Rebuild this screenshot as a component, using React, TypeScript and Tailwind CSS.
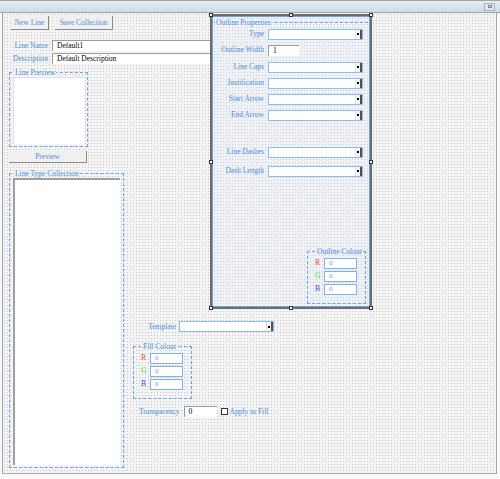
import React from 'react'

const grid = 'bg-[#f4f4f4] bg-[radial-gradient(circle,#c4c4c4_0.7px,transparent_0.9px)] bg-size-[3px_3px]'
const panelGrid = 'bg-[#eff1f4] bg-[radial-gradient(circle,#c6d0dc_0.7px,transparent_0.9px)] bg-size-[3px_3px]'
const txt = 'text-[#4a8fdc] text-[7.5px] leading-none'
const groupBorder = 'border border-dashed border-[#62a5e8]'

function Combo({ w }: { w: string }) {
  return (
    <div className={`${w} h-[11px] shrink-0 bg-white border border-[#8fbdea] flex justify-end`}>
      <div className="w-[7px] bg-[#f6f6f6] border-l border-[#dcdcdc] border-r-2 border-r-[#505050] flex items-center justify-center">
        <div className="w-[2px] h-[2px] bg-black" />
      </div>
    </div>
  )
}

function Sunken({ w, value }: { w: string; value: string }) {
  return (
    <div className={`${w} h-[11px] shrink-0 bg-white border-t border-l border-[#9a9a9a] flex items-center pl-[4px] text-[7.5px] leading-none text-black`}>
      {value}
    </div>
  )
}

function BlueBox({ value }: { value: string }) {
  return (
    <div className="w-[33px] h-[11px] bg-white border border-[#7fb3e6] flex items-center pl-[4px] text-[7px] leading-none text-[#7a9cc0]">
      {value}
    </div>
  )
}

function Btn({ w, h, label }: { w: string; h: string; label: string }) {
  return (
    <div className={`${w} ${h} bg-[#f0f0f0] border-r border-b border-[#8a8a8a] flex items-center justify-center ${txt}`}>
      {label}
    </div>
  )
}

function RGB() {
  const rows = [
    { l: 'R', c: 'text-[#e0504d]' },
    { l: 'G', c: 'text-[#3fe03f]' },
    { l: 'B', c: 'text-[#4b4bd6]' },
  ]
  return (
    <div className="flex flex-col gap-[2px]">
      {rows.map((r) => (
        <div key={r.l} className="flex items-center gap-[4px]">
          <span className={`w-[5px] text-[7.5px] leading-none ${r.c}`}>{r.l}</span>
          <BlueBox value="0" />
        </div>
      ))}
    </div>
  )
}

function Handle({ pos }: { pos: string }) {
  return <div className={`absolute w-[4px] h-[4px] bg-white border border-[#333] ${pos}`} />
}

const outlineRows: { label: string; mt: string; width?: boolean }[] = [
  { label: 'Type', mt: 'mt-[2px]' },
  { label: 'Outline Width', mt: 'mt-[5px]', width: true },
  { label: 'Line Caps', mt: 'mt-[6px]' },
  { label: 'Justification', mt: 'mt-[5px]' },
  { label: 'Start Arrow', mt: 'mt-[5px]' },
  { label: 'End Arrow', mt: 'mt-[5px]' },
  { label: 'Line Dashes', mt: 'mt-[26px]' },
  { label: 'Dash Length', mt: 'mt-[8px]' },
]

export default function App() {
  return (
    <div className="w-[500px] h-[479px] bg-[#f9f9f9] relative overflow-hidden font-['Liberation_Serif',serif]">
      {/* title strip */}
      <div className="h-[13px] border-t border-b border-[#a3a3a3] bg-linear-to-b from-[#e6edf5] to-[#ccdaea] flex justify-end items-center pr-[5px]">
        <div className="w-[11px] h-[8px] bg-[#dfe6ee] border border-[#aab4c0] flex items-center justify-center">
          <div className="w-[4px] h-[3px] border border-[#7a8694]" />
        </div>
      </div>

      {/* form surface */}
      <div className={`ml-[2px] w-[495px] h-[461px] border-l border-r border-b border-[#a6a6a6] flex ${grid}`}>
        {/* left column */}
        <div className="w-[120px] shrink-0 pl-[6px] pt-[3px] flex flex-col">
          <div className="flex gap-[6px] ml-[2px]">
            <Btn w="w-[38px]" h="h-[14px]" label="New Line" />
            <Btn w="w-[58px]" h="h-[14px]" label="Save Collection" />
          </div>
          <div className="flex items-center gap-[4px] mt-[10px]">
            <span className={`w-[39px] shrink-0 text-right ${txt}`}>Line Name</span>
            <Sunken w="w-[165px]" value="Default1" />
          </div>
          <div className="flex items-center gap-[4px] mt-[2px]">
            <span className={`w-[39px] shrink-0 text-right ${txt}`}>Description</span>
            <Sunken w="w-[165px]" value="Default Description" />
          </div>
          <fieldset className={`mt-[5px] w-[78px] h-[78px] ${groupBorder} px-[3px]`}>
            <legend className={`${txt} ml-[1px] px-[1px]`}>Line Preview</legend>
            <div className="w-[71px] h-[67px] bg-white border-t border-l border-[#e0e0e0]" />
          </fieldset>
          <div className="mt-[4px]">
            <Btn w="w-[78px]" h="h-[12px]" label="Preview" />
          </div>
          <fieldset className={`mt-[7px] w-[114px] h-[298px] ${groupBorder} px-[3px]`}>
            <legend className={`${txt} ml-[1px] px-[1px]`}>Line Type Collection</legend>
            <div className="w-[107px] h-[287px] bg-white border-t-2 border-l-2 border-[#a0a0a0]" />
          </fieldset>
        </div>

        {/* lower middle column */}
        <div className="ml-[10px] pt-[308px] flex flex-col">
          <div className="flex items-center gap-[3px]">
            <span className={`w-[43px] text-right ${txt}`}>Template</span>
            <Combo w="w-[95px]" />
          </div>
          <fieldset className={`mt-[11px] w-[59px] h-[56px] ${groupBorder} pl-[7px] pt-[2px]`}>
            <legend className={`${txt} ml-[1px] px-[1px]`}>Fill Colour</legend>
            <RGB />
          </fieldset>
          <div className="flex items-center mt-[7px] ml-[6px]">
            <span className={`${txt}`}>Transparency</span>
            <div className="ml-[4px]">
              <Sunken w="w-[33px]" value="0" />
            </div>
            <div className="ml-[4px] w-[7px] h-[7px] border border-[#333] bg-white" />
            <span className={`ml-[2px] ${txt}`}>Apply to Fill</span>
          </div>
        </div>
      </div>

      {/* selected Outline Properties panel (overlaps the name inputs) */}
      <div className="absolute left-[210px] top-[14px] w-[162px] h-[295px] border-2 border-[#6c6c6c]">
        <div className={`w-full h-full border border-[#6ea4dc] ${panelGrid} px-[1px] pt-[2px] pb-[2px]`}>
          <fieldset className="h-full border-t border-dashed border-[#62a5e8] flex flex-col">
            <legend className={`${txt} ml-[1px] px-[1px]`}>Outline Properties</legend>
            {outlineRows.map((r) => (
              <div key={r.label} className={`flex items-center gap-[4px] ${r.mt}`}>
                <span className={`w-[50px] text-right ${txt}`}>{r.label}</span>
                {r.width ? <Sunken w="w-[31px]" value="1" /> : <Combo w="w-[95px]" />}
              </div>
            ))}
            <fieldset className={`mt-auto self-end mr-[2px] w-[59px] h-[56px] ${groupBorder} pl-[7px] pt-[2px]`}>
              <legend className={`${txt} ml-[1px] px-[1px]`}>Outline Colour</legend>
              <RGB />
            </fieldset>
          </fieldset>
        </div>
        <Handle pos="-left-[3px] -top-[3px]" />
        <Handle pos="left-[77px] -top-[3px]" />
        <Handle pos="-right-[3px] -top-[3px]" />
        <Handle pos="-left-[3px] top-[144px]" />
        <Handle pos="-right-[3px] top-[144px]" />
        <Handle pos="-left-[3px] -bottom-[3px]" />
        <Handle pos="left-[77px] -bottom-[3px]" />
        <Handle pos="-right-[3px] -bottom-[3px]" />
      </div>
    </div>
  )
}
